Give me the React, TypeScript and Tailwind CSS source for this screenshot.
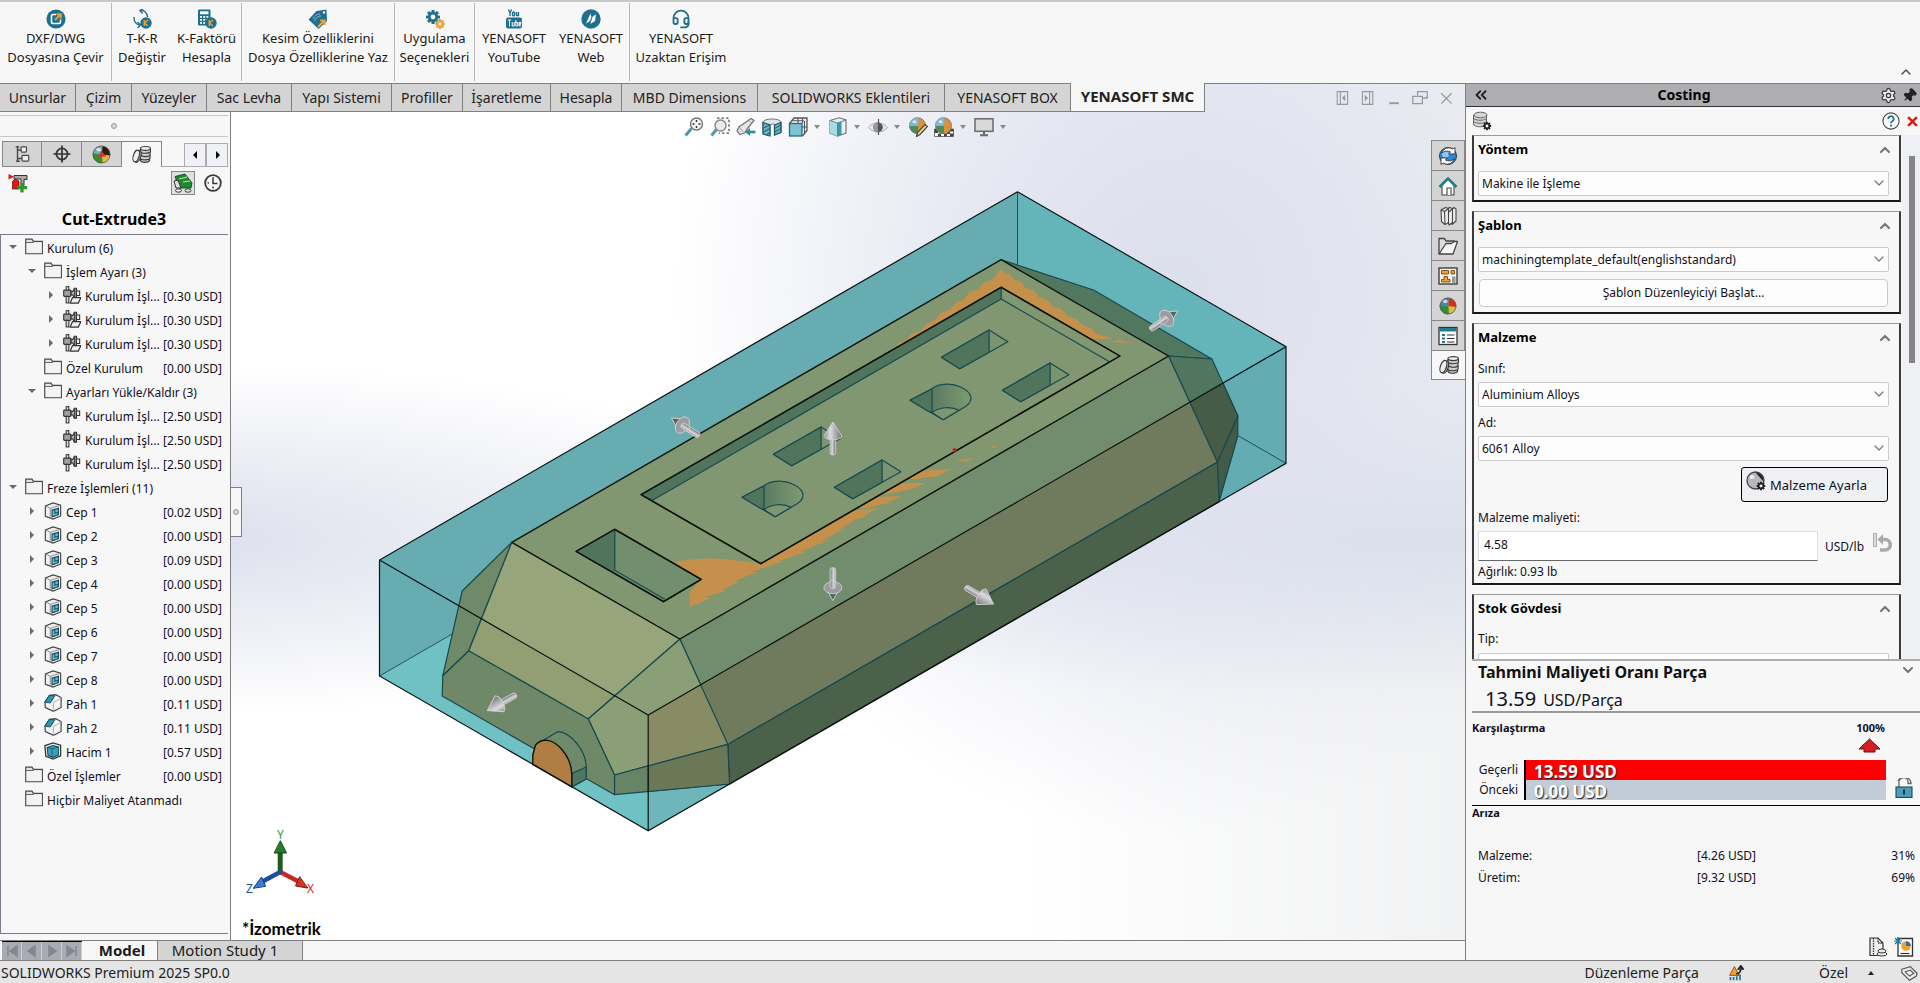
import type { ReactNode } from "react";
import { ChevronDown, ChevronUp, ChevronsLeft, Headset, Pin, Settings } from "lucide-react";

/* ---------- small icons ---------- */

function Svg({ size = 20, children, className = "" }: { size?: number; children: ReactNode; className?: string }) {
  return (
    <svg width={size} height={size} viewBox="0 0 20 20" fill="none" aria-hidden="true" className={`shrink-0 ${className}`}>
      {children}
    </svg>
  );
}

const TEAL = "#1f6f8f";
const ORANGE = "#f0a030";

const Gear = ({ x, y, s, fill, hole = "#f7f7f7" }: { x: number; y: number; s: number; fill: string; hole?: string }) => (
  <g transform={`translate(${x} ${y}) scale(${s})`}>
    {[0, 45, 90, 135].map((a) => (
      <rect key={a} x="-1.6" y="-7" width="3.2" height="14" rx="0.6" fill={fill} transform={`rotate(${a})`} />
    ))}
    <circle r="5" fill={fill} />
    <circle r="2.4" fill={hole} />
  </g>
);

const DxfIcon = () => (
  <Svg>
    <circle cx="10" cy="10" r="9.6" fill={TEAL} />
    <path d="M10 5.5H7a1.5 1.5 0 0 0-1.5 1.5v6A1.5 1.5 0 0 0 7 14.5h6a1.5 1.5 0 0 0 1.5-1.5v-2.500" stroke="#fff" strokeWidth="1.6" />
    <path d="M9 11l5-5M10.500 5.200h4.300v4.300" stroke={ORANGE} strokeWidth="2" />
  </Svg>
);
const KBadge = () => (
  <g>
    <circle cx="14" cy="14" r="5.700" fill={TEAL} />
    <path d="M12.300 11v6M16 11l-3.500 3 3.500 3" stroke={ORANGE} strokeWidth="1.500" />
  </g>
);
const TkrIcon = () => (
  <Svg>
    <path d="M2 8c0 5 2.500 8 6 8M5.500 13L8.500 16 5.500 19" stroke={TEAL} strokeWidth="1.400" />
    <path d="M8 1c5 0 7 3 7.500 7M11 0L8 1.500 10.500 4.500" stroke={TEAL} strokeWidth="1.400" />
    <KBadge />
  </Svg>
);
const CalcIcon = () => (
  <Svg>
    <rect x="1" y="0.500" width="12.500" height="16" rx="1" fill={TEAL} />
    <rect x="3" y="2.300" width="8.500" height="3" fill="#f7f7f7" />
    {[7, 10, 13].map((y) => [3, 6.2, 9.4].map((x) => <rect key={`${x}-${y}`} x={x} y={y} width="2" height="1.800" fill="#f7f7f7" />))}
    <KBadge />
  </Svg>
);
const TagIcon = () => (
  <Svg>
    <path d="M0.500 10.500L8.500 2l10-1.500L19 12l-8.500 8z" fill={TEAL} />
    <path d="M5 10c1.500-3 4-5 7-5M6.500 12c1-3 3.500-5 6.500-5" stroke="#8fc0d0" strokeWidth="0.900" />
    <circle cx="16" cy="3.500" r="1.200" fill="#fff" />
    <path d="M10 18l6-6M12 11.500h4.500V16" stroke={ORANGE} strokeWidth="2.200" />
  </Svg>
);
const GearsIcon = () => (
  <Svg>
    <Gear x={8} y={8} s={1} fill={TEAL} />
    <Gear x={15} y={15} s={0.7} fill={ORANGE} />
  </Svg>
);
const YouTubeIcon = () => (
  <Svg>
    <path d="M4.500 0.500l1.500 3.500 1.500-3.500M6 4v3M9.500 3a1 1.200 0 0 0-1 1.200v1.500a1 1.200 0 0 0 2 0V4.200a1 1.200 0 0 0-1-1.200zM12.500 3v3.500h2V3" stroke={TEAL} strokeWidth="1.400" />
    <rect x="2" y="8.500" width="16" height="11" rx="2" fill={TEAL} />
    <path d="M3.800 11h3.400M5.500 11v6.500M8.200 13v4h2v-4M11.800 11v6h2v-3.500h-2M17 15.300h-1.800v-2H17v1h-1.500M15.200 15v2H17" stroke="#fff" strokeWidth="1" />
  </Svg>
);
const WebIcon = () => (
  <Svg>
    <circle cx="10" cy="10" r="9.700" fill={TEAL} />
    <path d="M9.500 4.500L5 14.500l4-2.500 1.500-4zM15 5.500l-4 2.500-1.800 7 4.800-3z" fill="#fff" />
    <path d="M12.800 3L8 17" stroke={TEAL} strokeWidth="0.900" />
  </Svg>
);

const TreeTabIcon = () => (
  <Svg size={18}>
    <path d="M5 1v17M3 2h4M5 5.500h4M5 15h5M3.500 18h4" stroke="#444" strokeWidth="1.500" />
    <rect x="9" y="2" width="6" height="6" rx="1" stroke="#444" strokeWidth="1.300" fill="#eee" />
    <rect x="10" y="11.500" width="7.500" height="6.500" rx="1" stroke="#444" strokeWidth="1.300" fill="#eee" />
  </Svg>
);
const TargetIcon = () => (
  <Svg size={18}>
    <circle cx="10" cy="10" r="6.200" stroke="#333" strokeWidth="1.900" />
    <path d="M10 0.500v19M0.500 10h19" stroke="#333" strokeWidth="1.900" />
  </Svg>
);
const BallIcon = ({ size = 20, cut = false }: { size?: number; cut?: boolean }) => (
  <Svg size={size}>
    <circle cx="10" cy="10" r="9" fill="#e8b53c" />
    <path d="M10.500 10L1.200 9A9 9 0 0 1 11 1z" fill={cut ? "#6ea8cc" : "#3f86c4"} />
    <path d="M10.500 10L1 9A9 9 0 0 0 11 19z" fill="#2f8f38" />
    <path d="M10.500 10L11 1A9 9 0 0 1 19 11z" fill={cut ? "#2a1a10" : "#cf3020"} />
    {cut && <path d="M10 6l5 6-9 1z" fill="#d03828" />}
    <circle cx="10" cy="10" r="9" stroke="#555" strokeWidth="0.900" />
    <ellipse cx="7" cy="5" rx="2.600" ry="1.900" fill="#fff" opacity="0.700" />
  </Svg>
);
const CoinsIcon = ({ size = 20 }: { size?: number }) => (
  <Svg size={size}>
    <g stroke="#3c3c3c" strokeWidth="1.200" fill="#cfcfcf" strokeLinejoin="round">
      <path d="M9 14v2.500c1 2.300 8 2.300 9.500 0V14" />
      <path d="M8.500 10.500V14c1 2.300 9 2.300 10.500 0v-3.500" />
      <path d="M9.500 7v3.500c1 2.300 8.500 2.300 9.500 0V7" />
      <path d="M9 3.500V7c1 2.300 9 2.300 10.500 0V3.500" />
      <ellipse cx="14.200" cy="3.600" rx="5.200" ry="2" fill="#f0f0f0" />
      <ellipse cx="6" cy="12" rx="3.200" ry="6.500" transform="rotate(18 6 12)" fill="#b4b4b4" />
      <ellipse cx="4.400" cy="11.600" rx="3" ry="6.400" transform="rotate(18 4.400 11.600)" fill="#efefef" />
    </g>
  </Svg>
);
const StackGearIcon = () => (
  <Svg size={20}>
    <g stroke="#666" strokeWidth="1" fill="#d6d6d6">
      <path d="M1.500 4v9c0 3.500 12 4 13 0V4" />
      <path d="M1.500 7c1 3 12 3 13.500 0M1.500 10c1 3 12 3 13.500 0" fill="none" />
      <ellipse cx="8.500" cy="4" rx="6.500" ry="2.800" />
    </g>
    <Gear x={15} y={15} s={0.6} fill="#222" />
  </Svg>
);
const AddCostIcon = () => (
  <Svg size={20}>
    <path d="M6 2.500h13v4h-3v6h-3V6H6z" fill="#aaa" stroke="#333" strokeWidth="1" />
    <path d="M0.500 1L6 3.800 0.500 6.500z" fill="#e01818" />
    <path d="M4.500 8.500l2.500-2.500 4 2v8H4.500z" fill="#e01818" stroke="#600" strokeWidth="0.700" />
    <path d="M14 10v9.500M9.500 14.700h9.500" stroke="#2a9a2a" strokeWidth="3.200" />
  </Svg>
);
const CartIcon = () => (
  <Svg size={20}>
    <path d="M2 3.500l10-2.500 7 9-1 5H6z" fill="#1f8a2c" stroke="#144d1a" strokeWidth="0.900" />
    <path d="M1 8l4-1 3 8H3z" fill="#ddd" stroke="#333" strokeWidth="1" />
    <path d="M6 6l8-2M10 9l7-1" stroke="#b8e0b8" strokeWidth="1.200" />
    <ellipse cx="5.500" cy="17.500" rx="3" ry="1.700" stroke="#333" strokeWidth="1" fill="#eee" />
    <ellipse cx="15" cy="17.500" rx="3" ry="1.700" stroke="#333" strokeWidth="1" fill="#eee" />
  </Svg>
);
const ClockIcon = () => (
  <Svg size={18}>
    <circle cx="10" cy="10" r="8.700" fill="#fbfbfb" stroke="#3a3a3a" strokeWidth="2" />
    <path d="M10 3.500V10.500h5M10 14v2M4 10h1.500" stroke="#3a3a3a" strokeWidth="1.700" />
  </Svg>
);

const FolderIcon = () => (
  <Svg size={18}>
    <path d="M0.800 17.500V1.200h7l1.500 2.500h10v13.800z" fill="#e4e4e4" stroke="#4a4a4a" strokeWidth="1.300" />
    <path d="M2 5.500h16.500v11H2z" fill="#f3f3f3" />
    <path d="M1 5h8.500l1-1.200" stroke="#4a4a4a" strokeWidth="0.900" />
  </Svg>
);
const SetupIcon = ({ folder = false }: { folder?: boolean }) => (
  <Svg size={18}>
    <rect x="3.500" y="0.800" width="3" height="18" fill="#ddd" stroke="#333" strokeWidth="1.200" />
    <rect x="0.800" y="4.500" width="8" height="7" rx="1" fill="#a0a0a0" stroke="#333" strokeWidth="1.300" />
    <path d="M9 6h2l1.500-3.500h2.500v11h-2.500L11 10H9z" fill="#aaa" stroke="#333" strokeWidth="1.200" />
    <path d="M15 5.500h3.500v5H15M13 3.500v10" stroke="#333" strokeWidth="1.200" />
    {folder && <path d="M8 19l2.500-6h9.300L17 19z" fill="#f0f0f0" stroke="#333" strokeWidth="1.300" />}
  </Svg>
);
const PocketIcon = () => (
  <Svg size={18}>
    <path d="M1.500 4.500L10 1l8.500 2.500v12L10 19l-8.500-3z" fill="#efefef" stroke="#444" strokeWidth="1.300" />
    <path d="M1.500 4.500L7 7v11.500" stroke="#888" strokeWidth="1" />
    <path d="M7 7l11.500-3.500" stroke="#888" strokeWidth="1" />
    <path d="M9 9l7-2v7l-7 2.500z" fill="#6fc0cc" stroke="#17506a" strokeWidth="1.400" />
    <path d="M12 8.500v4l4-1" stroke="#17506a" strokeWidth="1.200" />
  </Svg>
);
const ChamferIcon = () => (
  <Svg size={18}>
    <path d="M1 9l5-7.500L13 0.800 19 4v11l-8.500 4.200L1.500 15z" fill="#f4f4f4" stroke="#444" strokeWidth="1.300" />
    <path d="M10.500 19V9.500L19 4.500" stroke="#aaa" strokeWidth="1" />
    <path d="M1 9l5-7.500 6 0.500-5 8z" fill="#2d95a5" stroke="#17506a" strokeWidth="1.100" />
  </Svg>
);
const VolumeIcon = () => (
  <Svg size={18}>
    <path d="M1 4l9-3 8.500 2.500v12L10 19l-8-3z" fill="#dff0f2" stroke="#333" strokeWidth="1.400" />
    <path d="M3.500 6l6.500-2 6 1.500v9L10 17l-5.500-2z" fill="#3aa4b4" stroke="#17506a" strokeWidth="1.200" />
    <path d="M3.500 6L9 7.500V17M9 7.500l7-2" stroke="#17506a" strokeWidth="0.900" />
  </Svg>
);

/* view toolbar */
const ZoomFit = () => (
  <Svg>
    <path d="M1.500 18.500l6-7" stroke="#4d98ae" strokeWidth="3" />
    <circle cx="12.500" cy="7" r="6" fill="#f4f4f4" stroke="#777" strokeWidth="1.400" />
    <path d="M12.500 3v2M12.500 9v2M8.500 7h2M14.500 7h2" stroke="#333" strokeWidth="1.500" />
  </Svg>
);
const ZoomArea = () => (
  <Svg>
    <path d="M1.500 18.500l5-6" stroke="#4d98ae" strokeWidth="3" />
    <path d="M7 1.200h12v15H9" stroke="#555" strokeWidth="1.300" strokeDasharray="2.500 2" />
    <circle cx="10.500" cy="8.500" r="5.500" fill="#e9e9ee" stroke="#888" strokeWidth="1.400" />
  </Svg>
);
const PrevView = () => (
  <Svg>
    <path d="M15 1.500l3 2-6.500 8-3 4.500-4.500 1.500L1 14l2-4z" fill="#e8e8e8" stroke="#777" strokeWidth="1.300" />
    <path d="M3 10l5 5.500M12.500 3.500l3.500 3" stroke="#999" strokeWidth="1" />
    <path d="M19.500 15h-6" stroke="#2d8ca0" strokeWidth="2.600" />
    <path d="M9 15l5-4v8z" fill="#2d8ca0" />
  </Svg>
);
const SectionView = () => (
  <Svg>
    <path d="M1 5c1-4 17-4 18 0v10l-5 2V8.500c-2-2-4-2-6 0V18L1 16z" fill="#e4e4e4" stroke="#777" strokeWidth="1" />
    <path d="M1 5.500L8 8v11l-7-2zM12.500 8L19 5.500v10L12.500 18z" fill="#6fb3c6" stroke="#1d5a70" strokeWidth="1.300" />
    <path d="M1.500 11L8 8M1.500 15L8 11.500M4 18l4-2.500M12.500 11.500L19 8M12.500 15l6.500-3.500" stroke="#1d5a70" strokeWidth="1" />
  </Svg>
);
const OrientationIcon = () => (
  <Svg>
    <path d="M1.500 6.500L6 1h13v12.500L14.500 19" stroke="#555" strokeWidth="1.300" fill="#f4f4f4" />
    <path d="M10 1v5M14.500 1v5M4 3.800h12M16.500 4v12M14 10h5" stroke="#555" strokeWidth="1.100" />
    <rect x="1.500" y="6.500" width="12.500" height="12.500" fill="#7cc4d4" stroke="#2a6a80" strokeWidth="1.300" />
  </Svg>
);
const DisplayStyleIcon = () => (
  <Svg>
    <path d="M2 3.500L11 0.800l7 2.200v13L9.500 19.200 2 16z" fill="#efefef" stroke="#777" strokeWidth="1.200" />
    <path d="M2 3.500l7.500 2.500v13.200L2 16z" fill="#a8dbe6" />
    <path d="M9.500 6l4-1.500v13l-4 1.700z" fill="#3f98b0" />
    <path d="M2 3.500l7.500 2.500L18 3M9.500 6v13" stroke="#4d7f8f" strokeWidth="0.900" />
  </Svg>
);
const EyeIcon = () => (
  <Svg>
    <path d="M0.500 10.500C4 5 14 4 19.500 10.500 14 17 5 16 0.500 10.500z" fill="#e9e9e9" stroke="#aaa" strokeWidth="1" />
    <circle cx="10" cy="10.300" r="4.800" fill="#555" />
    <path d="M10 5.500a4.800 4.800 0 0 0 0 9.600z" fill="#999" />
    <path d="M10.500 2v16" stroke="#555" strokeWidth="1.200" />
  </Svg>
);
const SceneBall = () => (
  <g>
    <circle cx="9.500" cy="8.700" r="8" fill="#d9923a" stroke="#777" strokeWidth="0.900" />
    <path d="M10 9H1.500A8 8 0 0 1 10.500 0.800z" fill="#7db8dc" />
    <path d="M10 9H1.500a8 8 0 0 0 8.500 7.600z" fill="#4f8a5c" />
    <ellipse cx="6.500" cy="4.800" rx="2" ry="1.500" fill="#fff" opacity="0.700" />
  </g>
);
const EditAppearance = () => (
  <Svg>
    <SceneBall />
    <path d="M17 7.500l2.500 2L12 17.500l-3.500 2 1-4z" fill="#f6d488" stroke="#444" strokeWidth="1.200" />
  </Svg>
);
const SceneIcon = () => (
  <Svg>
    <path d="M0.500 12h19v7.500H0.500z" fill="#fff" stroke="#555" strokeWidth="0.800" />
    <path d="M0.500 12h3.500v4H0.500zM7 14h3v3H7zM13 14h3v3h-3zM16 12h3.500v2.500H16zM4 16.500h3v3H4zM10 16.500h3v3h-3zM16 16.500h3.500v3H16z" fill="#444" />
    <SceneBall />
  </Svg>
);
const MonitorIcon = () => (
  <Svg>
    <rect x="1" y="1.800" width="18" height="12.500" fill="#d8d8d8" stroke="#6a6a6a" strokeWidth="1.500" />
    <path d="M10 14.500v3.500M6 18.300h8" stroke="#6a6a6a" strokeWidth="2" />
  </Svg>
);

/* task pane */
const RefreshBall = () => (
  <Svg>
    <circle cx="10" cy="10" r="8.500" fill="#2f86d8" stroke="#134" strokeWidth="0.900" />
    <circle cx="7.500" cy="8" r="3.500" fill="#8fc6f4" />
    <path d="M3.500 7C5.500 2 11 0.500 14.500 3L17 1.500V8h-6.500l2-2C10 4.500 6.500 5 3.500 7z" fill="#fff" stroke="#333" strokeWidth="0.900" />
    <path d="M16.500 13c-2 5-7.500 6.500-11 4L3 18.500V12h6.500l-2 2c2.500 1.500 6 1 9-1z" fill="#fff" stroke="#333" strokeWidth="0.900" />
  </Svg>
);
const HomeIcon = () => (
  <Svg>
    <path d="M4 9v10h12V9l-6-6z" fill="#fff" stroke="#444" strokeWidth="1.100" />
    <path d="M1.500 11L10 2.500 18.500 11" stroke="#237a8c" strokeWidth="2.600" />
    <path d="M9 19v-7h4v7" fill="#fff" stroke="#444" strokeWidth="1.100" />
  </Svg>
);
const BooksIcon = () => (
  <Svg>
    <g fill="#eee" stroke="#444" strokeWidth="1.100" strokeLinejoin="round">
      <path d="M12 5l4-3.500 2 1.500v12L14 18.500z" />
      <path d="M7.500 4.500L11.500 1.500l3 1v14L11 19z" />
      <path d="M3 4l4.500-2.500 3 1v14L7 18.500l-3.500-3z" />
      <path d="M3 4l3.500 1.500L7 18.500M6.500 5.500l4-3M11 6l3-3" fill="none" />
    </g>
  </Svg>
);
const OpenFolder = () => (
  <Svg>
    <path d="M1 18V2.500h5.500L8 5h8v3" fill="#dcdcdc" stroke="#444" strokeWidth="1.300" />
    <path d="M1 18L8 7.500h5.500L16 5.500h3.500L15 18z" fill="#f6f6f6" stroke="#444" strokeWidth="1.300" strokeLinejoin="round" />
  </Svg>
);
const PaletteIcon = () => (
  <Svg>
    <rect x="1" y="2" width="18" height="16" fill="#f5f5f5" stroke="#333" strokeWidth="1.300" />
    <path d="M3.500 4.500h7v3.500h-7zM13 4.500h3.500V8H13zM6 10.500h3.500v3h2.500V16H3.500v-2.500H6z" fill={ORANGE} stroke="#7a4a10" strokeWidth="0.900" />
    <path d="M14 10.500h3.500V17H14z" fill="#999" />
  </Svg>
);
const PropsIcon = () => (
  <Svg>
    <rect x="1" y="1.500" width="18" height="17" fill="#fff" stroke="#333" strokeWidth="1.300" />
    <path d="M1.700 2h16.600v3.500H1.700z" fill="#237a8c" />
    <path d="M4 8h3v2H4zM4 11.500h3v2H4zM4 15h3v2H4z" fill="#237a8c" />
    <path d="M9 9h7.500M9 12.500h7.500M9 16h7.500" stroke="#333" strokeWidth="1.200" />
  </Svg>
);

/* ---------- ribbon ---------- */

type RibbonItem = { a: string; b: string; icon: ReactNode; w: string };
const ribbon: RibbonItem[][] = [
  [{ a: "DXF/DWG", b: "Dosyasına Çevir", icon: <DxfIcon />, w: "w-[111px]" }],
  [
    { a: "T-K-R", b: "Değiştir", icon: <TkrIcon />, w: "w-[60px]" },
    { a: "K-Faktörü", b: "Hesapla", icon: <CalcIcon />, w: "w-[69px]" },
  ],
  [{ a: "Kesim Özelliklerini", b: "Dosya Özelliklerine Yaz", icon: <TagIcon />, w: "w-[152px]" }],
  [{ a: "Uygulama", b: "Seçenekleri", icon: <GearsIcon />, w: "w-[79px]" }],
  [
    { a: "YENASOFT", b: "YouTube", icon: <YouTubeIcon />, w: "w-[78px]" },
    { a: "YENASOFT", b: "Web", icon: <WebIcon />, w: "w-[76px]" },
  ],
  [{ a: "YENASOFT", b: "Uzaktan Erişim", icon: <Headset size={20} color={TEAL} strokeWidth={2.2} aria-hidden="true" />, w: "w-[102px]" }],
];

function Ribbon() {
  return (
    <header className="flex h-[83px] shrink-0 items-start justify-between border-t-2 border-[#c8c8c8] bg-[#f7f7f7]">
      <div className="flex pt-px">
        {ribbon.map((group, i) => (
          <div key={i} className={`flex h-[78px] ${i < ribbon.length - 1 ? "border-r border-[#b8b8b8]" : ""}`}>
            {group.map((it) => (
              <button key={it.b} type="button" className={`flex flex-col items-center pt-[6px] text-[13px] leading-[19px] whitespace-nowrap text-[#1a1a1a] ${it.w}`}>
                {it.icon}
                <span>{it.a}</span>
                <span>{it.b}</span>
              </button>
            ))}
          </div>
        ))}
      </div>
      <button type="button" aria-label="Daralt" className="mr-[6px] self-end pb-[3px]">
        <ChevronUp size={16} color="#444" />
      </button>
    </header>
  );
}

const tabs = [
  { t: "Unsurlar", w: "w-[76px]" },
  { t: "Çizim", w: "w-[56px]" },
  { t: "Yüzeyler", w: "w-[75px]" },
  { t: "Sac Levha", w: "w-[85px]" },
  { t: "Yapı Sistemi", w: "w-[100px]" },
  { t: "Profiller", w: "w-[71px]" },
  { t: "İşaretleme", w: "w-[88px]" },
  { t: "Hesapla", w: "w-[71px]" },
  { t: "MBD Dimensions", w: "w-[136px]" },
  { t: "SOLIDWORKS Eklentileri", w: "w-[187px]" },
  { t: "YENASOFT BOX", w: "w-[126px]" },
];

function TabStrip() {
  return (
    <div className="flex h-[29px] shrink-0 justify-between">
      <nav className="flex text-sm whitespace-nowrap text-[#222]">
        {tabs.map((tab) => (
          <button key={tab.t} type="button" className={`border-y border-r border-[#808080] bg-[#d4d4d4] ${tab.w}`}>
            {tab.t}
          </button>
        ))}
        <button type="button" className="w-[134px] border-r border-b border-[#808080] bg-[#f7f7f7] text-[15px] font-bold">
          YENASOFT SMC
        </button>
      </nav>
      <div className="flex flex-1 items-center justify-end gap-[10px] border-t border-[#808080] pr-[11px]">
        <Svg size={16}>
          <path d="M4 2h13v16H4zM8 2v16" stroke="#999" strokeWidth="1.400" />
          <path d="M14 6v8l-4-4z" fill="#999" />
        </Svg>
        <Svg size={16}>
          <path d="M3 2h13v16H3zM12 2v16" stroke="#999" strokeWidth="1.400" />
          <path d="M6 6v8l4-4z" fill="#999" />
        </Svg>
        <Svg size={16}>
          <path d="M4 16.500h12" stroke="#999" strokeWidth="2.400" />
        </Svg>
        <Svg size={16}>
          <path d="M7 7V2h12v8h-5M1 8h12v9H1z" stroke="#999" strokeWidth="1.600" />
        </Svg>
        <Svg size={16}>
          <path d="M4 4l13 13M17 4L4 17" stroke="#999" strokeWidth="1.600" />
        </Svg>
      </div>
    </div>
  );
}

/* ---------- cost tree ---------- */

type Row = { lvl: 0 | 1 | 2; open?: boolean; arrow?: boolean; icon: ReactNode; t: string; p?: string };
const pockets = ["0.02", "0.00", "0.09", "0.00", "0.00", "0.00", "0.00", "0.00"];
const rows: Row[] = [
  { lvl: 0, arrow: true, open: true, icon: <FolderIcon />, t: "Kurulum (6)" },
  { lvl: 1, arrow: true, open: true, icon: <FolderIcon />, t: "İşlem Ayarı (3)" },
  { lvl: 2, arrow: true, icon: <SetupIcon folder />, t: "Kurulum İşl...", p: "0.30" },
  { lvl: 2, arrow: true, icon: <SetupIcon folder />, t: "Kurulum İşl...", p: "0.30" },
  { lvl: 2, arrow: true, icon: <SetupIcon folder />, t: "Kurulum İşl...", p: "0.30" },
  { lvl: 1, icon: <FolderIcon />, t: "Özel Kurulum", p: "0.00" },
  { lvl: 1, arrow: true, open: true, icon: <FolderIcon />, t: "Ayarları Yükle/Kaldır (3)" },
  { lvl: 2, icon: <SetupIcon />, t: "Kurulum İşl...", p: "2.50" },
  { lvl: 2, icon: <SetupIcon />, t: "Kurulum İşl...", p: "2.50" },
  { lvl: 2, icon: <SetupIcon />, t: "Kurulum İşl...", p: "2.50" },
  { lvl: 0, arrow: true, open: true, icon: <FolderIcon />, t: "Freze İşlemleri (11)" },
  ...pockets.map((p, i): Row => ({ lvl: 1, arrow: true, icon: <PocketIcon />, t: `Cep ${i + 1}`, p })),
  { lvl: 1, arrow: true, icon: <ChamferIcon />, t: "Pah 1", p: "0.11" },
  { lvl: 1, arrow: true, icon: <ChamferIcon />, t: "Pah 2", p: "0.11" },
  { lvl: 1, arrow: true, icon: <VolumeIcon />, t: "Hacim 1", p: "0.57" },
  { lvl: 0, icon: <FolderIcon />, t: "Özel İşlemler", p: "0.00" },
  { lvl: 0, icon: <FolderIcon />, t: "Hiçbir Maliyet Atanmadı" },
];
const indents = ["pl-[8px]", "pl-[27px]", "pl-[46px]"];

function CostTree() {
  return (
    <ul className="min-h-0 flex-1 overflow-hidden border-t border-b border-l border-[#7b7b8b] text-xs text-[#10101c]">
      {rows.map((r, i) => (
        <li key={i} className={`flex h-[24px] items-center pr-[6px] whitespace-nowrap ${indents[r.lvl]}`}>
          <svg width="8" height="8" viewBox="0 0 8 8" className="mr-[8px] shrink-0" aria-hidden="true">
            {r.arrow && <path d={r.open ? "M0 2h8L4 6z" : "M2 0v8l4-4z"} fill="#6a6a6a" />}
          </svg>
          {r.icon}
          <span className="ml-[4px] flex-1 pt-[3px]">{r.t}</span>
          {r.p && <span className="pt-[3px]">[{r.p} USD]</span>}
        </li>
      ))}
    </ul>
  );
}

function LeftPanel() {
  const tab = "flex h-[26px] w-[40px] items-center justify-center border-t border-r border-[#888]";
  return (
    <aside className="flex w-[231px] shrink-0 flex-col border-r border-[#808080] bg-[#f7f7f7] pr-[2px]">
      <div className="mt-[3px] flex h-[22px] items-center justify-center border-y border-[#c8c8c8]">
        <span className="size-[6px] rounded-full border border-[#999] bg-[#d8d8d8]" />
      </div>
      <div className="mt-1 flex pl-[2px]">
        <button type="button" aria-label="Tasarım ağacı" className={`${tab} border-b border-l bg-[#d4d4d4]`}><TreeTabIcon /></button>
        <button type="button" aria-label="Hedef" className={`${tab} border-b bg-[#d4d4d4]`}><TargetIcon /></button>
        <button type="button" aria-label="Görünümler" className={`${tab} border-b bg-[#d4d4d4]`}><BallIcon size={19} cut /></button>
        <button type="button" aria-label="Maliyet" className={tab}><CoinsIcon size={19} /></button>
        <span className="flex-1 border-b border-[#aaa]" />
        {["M6 2v8L2 6z", "M3 2v8l4-4z"].map((d, i) => (
          <button key={d} type="button" aria-label={i ? "İleri" : "Geri"} className="mt-[2px] flex h-[24px] w-[22px] items-center justify-center border border-[#aaaab0] bg-[#f0f1f5]">
            <svg width="9" height="12" viewBox="0 0 9 12" aria-hidden="true"><path d={d} fill="#000" /></svg>
          </button>
        ))}
      </div>
      <div className="mt-1 flex h-[24px] items-center pr-[6px] pl-[8px]">
        <button type="button" aria-label="Maliyet ekle"><AddCostIcon /></button>
        <button type="button" aria-label="Maliyet" className="ml-auto flex size-[24px] items-center justify-center border border-[#888] bg-[#e0e0e0]"><CartIcon /></button>
        <button type="button" aria-label="Süre" className="ml-[9px]"><ClockIcon /></button>
      </div>
      <h1 className="flex h-[39px] items-center justify-center pt-[9px] text-base font-bold text-black">Cut-Extrude3</h1>
      <CostTree />
      <div className="h-[6px] shrink-0" />
    </aside>
  );
}

/* ---------- viewport ---------- */

const EDGE = { stroke: "#17494f", strokeWidth: 1.2, strokeLinejoin: "round" } as const;
const BLACK = { stroke: "#10150c", strokeWidth: 1.4, strokeLinejoin: "round" } as const;

const SlotHole = ({ x = 0, y = 0 }) => (
  <g transform={`translate(${x} ${y})`} {...EDGE}>
    <path d="M989.600 330L1008.400 341.700 960.200 368.700 941.900 357.300z" fill="#7a946f" />
    <path d="M989.600 330V352.300L960.200 368.700 941.900 357.300z" fill="#51755c" />
  </g>
);
const RoundHole = ({ x = 0, y = 0 }) => (
  <g transform={`translate(${x} ${y})`} {...EDGE}>
    <path d="M910.600 400.300L932.500 388.700C940 383 953 383 961 387C974 393 974 401 966 406.500L943.700 419.700z" fill="url(#bore)" />
    <path d="M910.600 400.300L932.500 388.700V411.700L930 412z" fill="#51755c" />
    <path d="M932.500 412.500C940 407 952 406 959.500 410.300L943.700 419.700z" fill="#7f9771" />
  </g>
);
const Arrow = ({ x, y, r, back = false }: { x: number; y: number; r: number; back?: boolean }) => (
  <g transform={`translate(${x} ${y}) rotate(${r})`} stroke="#d0d0d0" strokeWidth="0.900">
    <rect x="-2.800" y="12" width="5.600" height="21" rx="2.400" fill="url(#shaft)" />
    {back ? (
      <>
        <path d="M-6 11L0 0l6 11z" fill="#4f6a58" />
        <ellipse cx="0" cy="13" rx="9" ry="6" fill="#9b9ba0" />
        <rect x="-2.800" y="12" width="5.600" height="9" rx="2.400" fill="url(#shaft)" />
      </>
    ) : (
      <path d="M0 0L9 14C7 19-7 19-9 14z" fill="url(#shaft)" />
    )}
  </g>
);

function ModelCanvas() {
  return (
    <svg viewBox="231 112 1235 828" preserveAspectRatio="xMidYMid slice" className="absolute inset-0 h-full w-full" role="img" aria-label="Parça modeli">
      <defs>
        <linearGradient id="bore" x1="0" x2="1">
          <stop offset="0.300" stopColor="#56785f" />
          <stop offset="1" stopColor="#809a72" />
        </linearGradient>
        <linearGradient id="shaft" x1="0" x2="1">
          <stop offset="0" stopColor="#8a8a90" />
          <stop offset="0.350" stopColor="#dcdce0" />
          <stop offset="1" stopColor="#707076" />
        </linearGradient>
        <clipPath id="under">
          <path d="M380 560L648.700 715L1286.500 346.700V900H380z" />
        </clipPath>
      </defs>

      {/* stock block */}
      <path d="M380 560L1018 191.700V308L380 676z" fill="#66acb1" />
      <path d="M1018 191.700L1286.500 346.700V463.300L1018 308z" fill="#64b4ba" />
      <path d="M380 676L1018 308L1286.500 463.300L648.700 830.700z" fill="#6fc1c3" />
      <path d="M1286.500 346.700V463.300L1219 502 1180 408z" fill="#62acb2" />
      <path d="M648.700 780L735 782 648.700 830.700z" fill="#6db6ba" />
      <g stroke="#1c5358" strokeWidth="1">
        <path d="M1018 192V308M380 676L560 572M1180 402L1286.500 463.300" />
      </g>

      {/* part */}
      <g {...EDGE}>
        <path d="M1001.700 259.700L1094 290 1212.400 359 1169 356z" fill="#52775f" />
        <path d="M1169 356L1212.400 359 1238.300 416 1217.800 462z" fill="#507660" />
        <path d="M1238.300 416V436L1219.600 501.700 1217.800 462z" fill="#445a48" />
        <path d="M728.300 744.300L1217.800 462 1219.600 501.700 730 784z" fill="#4c6149" />
        <path d="M680.300 639L1169 356 1217.800 462 728.300 744.300z" fill="#718d6d" />
        <path d="M680.300 639L728.300 744.300 615 775 588.700 718.700z" fill="#8a9f76" />
        <path d="M615 775L728.300 744.300 730 784 615 794.700z" fill="#688467" />
        <path d="M512.300 542.300L462.700 591 443.300 675.700 469.300 650.700z" fill="#6f8a69" />
        <path d="M512.300 542.300L680.300 639 588.700 718.700 469.300 650.700z" fill="#96a67a" />
        <path d="M469.300 650.700L588.700 718.700 615 775V794.700L442.700 696 443.300 675.700z" fill="#6f8868" />
      </g>
      {/* shading of the part below the stock's front edges */}
      <g clipPath="url(#under)">
        <path d="M1169 356L1212.400 359 1238.300 416 1217.800 462z" fill="#465c47" {...EDGE} />
        <path d="M680.300 639L1169 356 1217.800 462 728.300 744.300z" fill="#707a5c" {...EDGE} />
        <path d="M512.300 542.300L680.300 639 588.700 718.700 469.300 650.700z" fill="#929f72" {...EDGE} />
        <path d="M648.700 640H728V744.300L648.700 766z" fill="#878c64" />
        <path d="M728 560H900L728.300 744.300 680.300 639z" fill="#707a5c" />
        <path d="M680.300 639L728.300 744.300 648.700 766" fill="none" {...EDGE} />
        <path d="M648.700 766L728.300 744.300 730 784 648.700 791.500z" fill="#6b7858" {...EDGE} />
      </g>

      <path d="M512.300 542.300L1001.700 259.700 1169 356 680.300 639z" fill="#809771" {...BLACK} />
      <g fill="#c4904c">
        <path d="M1002 269l4 5 5 0 3 6 7 1 5 7 8 2 5 7 9 3 6 7 8 2 6 7 9 3 6 6 8 3 5 5 9 3 8 3H1092L1001.700 287.300 893 350l8-8 5-1 6-7 9-3 6-7 9-4 5-7 9-3 6-7 9-4 5-7 9-3 6-7 8-2 5-7z" />
        <path d="M1110 342l10-2 4 1 12 2z" />
        <path d="M675 562.300C700 556 725 558 761.300 563.700L849 513 857 512 853 522 838 530 846 528 822 541 832 539 800 552 806 552 780 561 785 561 752 572 758 572 735 581 740 582 722 590 727 591 705 597 712 598 690 607 690 592 701.700 579.300z" />
        <path d="M850 511L878 508 864 516 868 516 843 523z" />
        <path d="M876 497L902 496 888 503 868 508 858 508z" />
        <path d="M900 483L926 483 912 489 893 493 882 494z" />
        <path d="M920 471L951 469 938 476 917 479 908 479z" />
        <path d="M956 460L974 458 966 462zM990 447L999 445 994 448z" />
      </g>
      <path d="M641.700 494.700L1001.700 287.300 1120.400 356 761.300 563.700z" fill="#809771" {...BLACK} />
      <g {...EDGE}>
        <path d="M641.700 494.700L1001.700 287.300V299L652.600 500.500z" fill="#51755c" />
        <path d="M1001.700 299L1110 361.700" />
      </g>
      <path d="M641.700 494.700L1001.700 287.300 1120.400 356 761.300 563.700z" fill="none" {...BLACK} />
      <SlotHole />
      <SlotHole x={-168} y={97} />
      <SlotHole x={61} y={33} />
      <SlotHole x={-107} y={130} />
      <RoundHole />
      <RoundHole x={-168} y={97} />

      <path d="M615.300 529.300L701.700 579.300 664 601.700 576.700 551.300z" fill="#718f6d" {...BLACK} />
      <path d="M615.300 529.300V573.500L576.700 551.300z" fill="#51755c" />
      <path d="M615.300 529.300V570.300L665.300 599.300" fill="none" {...EDGE} />
      <path d="M615.300 529.300L701.700 579.300 664 601.700 576.700 551.300z" fill="none" {...BLACK} />
      <path d="M730 784L1219.600 501.700" {...BLACK} />
      <circle cx="955" cy="450" r="2" fill="#d02020" />

      {/* boss at the front */}
      <path d="M544.300 740L558 731.700C572 732 587 752 586.700 768V779L572.300 787z" fill="#6e8a6a" {...EDGE} />
      <path d="M572.300 773.500L586.700 767V779L572.300 787z" fill="#4f7660" {...EDGE} />
      <path d="M533.300 764.300V755L536 745C543 737 553 740 560 747C568 755 572 765 572.300 774V787z" fill="#b07d43" {...BLACK} />

      {/* stock outline */}
      <path d="M1018 191.700L1286.500 346.700V463.300L1219.600 501.700M730 784L648.700 830.700 380 676V560L1018 191.700M380 560L648.700 715 1286.500 346.700M648.700 715V830.700" fill="none" stroke="#0a1414" strokeWidth="1.200" />

      <Arrow x={833.4} y={422} r={0} />
      <Arrow x={833.4} y={600.7} r={180} back />
      <Arrow x={672} y={418} r={-57} back />
      <Arrow x={1178} y={311} r={56} back />
      <Arrow x={994} y={604} r={121} />
      <Arrow x={487.7} y={710.7} r={241} />

      {/* orientation triad */}
      <g strokeLinecap="round">
        <path d="M280.700 872V852" stroke="#1d5c1c" strokeWidth="5" />
        <path d="M281 841L287 853H275z" fill="#23802a" stroke="#163f18" />
        <path d="M280.700 872L298 881" stroke="#c8281e" strokeWidth="4.500" />
        <path d="M308 888L296 886 300 877z" fill="#d83224" stroke="#7a1810" />
        <path d="M280.700 872L264 881" stroke="#1c4ea0" strokeWidth="4.500" />
        <path d="M254 888L262 877 266 886z" fill="#3c7ad8" stroke="#153a78" />
      </g>
      <g fontFamily='"Noto Sans", sans-serif' fontSize="12" textAnchor="middle">
        <text x="281" y="839" fill="#2a9a2a">Y</text>
        <text x="311" y="893" fill="#e02020">X</text>
        <text x="250" y="893" fill="#1c4ea0">Z</text>
      </g>
    </svg>
  );
}

const Caret = () => <svg width="6" height="6" viewBox="0 0 6 6" className="shrink-0" aria-hidden="true"><path d="M0 1h6L3 5z" fill="#888" /></svg>;

function Viewport() {
  const pane = [
    { name: "Kaynaklar", icon: <RefreshBall /> },
    { name: "Ana sayfa", icon: <HomeIcon /> },
    { name: "Tasarım kitaplığı", icon: <BooksIcon /> },
    { name: "Dosya gezgini", icon: <OpenFolder /> },
    { name: "Görünüm paleti", icon: <PaletteIcon /> },
    { name: "Görünümler", icon: <BallIcon size={18} /> },
    { name: "Özel özellikler", icon: <PropsIcon /> },
  ];
  return (
    <main className="relative flex min-w-0 flex-1 flex-col overflow-hidden">
      <ModelCanvas />
      <div className="relative flex h-[30px] items-center gap-[6px] self-center pr-[6px]">
        <ZoomFit /><ZoomArea /><PrevView /><SectionView />
        <div className="flex items-center gap-[6px] pr-[2px]"><OrientationIcon /><Caret /></div>
        <div className="flex items-center gap-[6px] pr-[2px]"><DisplayStyleIcon /><Caret /></div>
        <div className="flex items-center gap-[6px] pr-[2px]"><EyeIcon /><Caret /></div>
        <EditAppearance />
        <div className="flex items-center gap-[6px] pr-[2px]"><SceneIcon /><Caret /></div>
        <MonitorIcon /><Caret />
      </div>
      <div className="absolute top-[28px] right-0 flex w-[34px] flex-col border-l border-[#888]">
        {pane.map((p) => (
          <button key={p.name} type="button" aria-label={p.name} className="flex h-[30px] items-center justify-center border-t border-r border-[#888] bg-[#d4d4d4]">
            {p.icon}
          </button>
        ))}
        <button type="button" aria-label="Costing" className="flex h-[30px] items-center justify-center border-y border-[#888] bg-[#f7f7f7]">
          <CoinsIcon />
        </button>
      </div>
      <div className="absolute top-[375px] left-0 flex h-[50px] w-[11px] items-center justify-center border border-l-0 border-[#808080] bg-[#f7f7f7]">
        <span className="size-[6px] rounded-full border border-[#999] bg-[#d8d8d8]" />
      </div>
      <div className="relative mt-auto ml-[11px] font-['Lato'] text-[17px] leading-[22px] font-bold text-black">*İzometrik</div>
    </main>
  );
}

function SheetTabs() {
  return (
    <div className="flex h-[20px] shrink-0 border-t border-[#808080] bg-[#f7f7f7] text-[15px] leading-[19px] text-[#1a1a1a]">
      <div className="ml-[2px] flex w-[80px] border-t border-black">
        {["M5 2v10M14 2v10L7 7z", "M12 2v10L5 7z", "M6 2v10l7-5z", "M13 2v10M4 2v10l7-5z"].map((d, i) => (
          <button key={d} type="button" aria-label={`Sekme gezintisi ${i + 1}`} className="flex w-[20px] items-center justify-center border-r border-[#d0d0d4] bg-[#a9aab2]">
            <svg width="18" height="14" viewBox="0 0 18 14" aria-hidden="true"><path d={d} fill="#85868f" stroke="#85868f" strokeWidth="1.500" /></svg>
          </button>
        ))}
      </div>
      <button type="button" className="w-[76px] border-r border-[#808080] pl-[5px] font-bold">Model</button>
      <button type="button" className="w-[145px] border-r border-[#808080] bg-[#d4d4d4] pr-[10px]">Motion Study 1</button>
    </div>
  );
}

/* ---------- costing pane ---------- */

function Group({ title, children, last = false }: { title: string; children: ReactNode; last?: boolean }) {
  return (
    <section className={`border-x-2 border-t border-x-[#3a3a3e] border-t-[#999] px-[4px] ${last ? "" : "mb-[9px] border-b-2 border-b-[#18181c]"}`}>
      <div className="flex h-[27px] items-center justify-between pr-[2px]">
        <h2 className="text-[13px] font-bold text-black">{title}</h2>
        <ChevronUp size={16} color="#777" strokeWidth={3.2} aria-hidden="true" />
      </div>
      {children}
    </section>
  );
}

function Select({ id, label, value }: { id: string; label: string; value: string }) {
  return (
    <div className="relative mr-[6px]">
      <select id={id} aria-label={label} defaultValue={value} className="block h-[25px] w-full appearance-none rounded-[2px] border border-[#ccc] bg-[#fdfdfd] pt-px pl-[3px] text-xs text-[#10101c]">
        <option>{value}</option>
      </select>
      <ChevronDown size={16} color="#777" strokeWidth={1.8} className="pointer-events-none absolute top-[4px] right-[2px]" aria-hidden="true" />
    </div>
  );
}

function Bar({ label, value, color }: { label: string; value: string; color: string }) {
  return (
    <div className="flex h-[20px] items-center">
      <span className="w-[46px] shrink-0 pr-[6px] text-right whitespace-nowrap">{label}</span>
      <div className={`h-full flex-1 border-l-2 border-black pl-[8px] text-[17px] leading-[24px] font-bold text-white [text-shadow:1px_1px_1px_#222] ${color}`}>{value}</div>
    </div>
  );
}

function CostingPane() {
  return (
    <aside className="flex w-[455px] shrink-0 flex-col border-t border-l border-[#808080] bg-[#f7f7f7] text-xs text-[#10101c]">
      <div className="flex h-[23px] shrink-0 items-center border-b border-[#333] bg-[#adaeb2] pr-[3px] pl-[6px]">
        <ChevronsLeft size={18} color="#222" strokeWidth={2.4} aria-hidden="true" />
        <h2 className="flex-1 pr-[2px] text-center text-sm font-bold text-black">Costing</h2>
        <Settings size={17} color="#333" fill="#e8e8e8" strokeWidth={1.7} aria-hidden="true" />
        <Pin size={15} color="#222" fill="#222" className="ml-[5px] rotate-45" aria-hidden="true" />
      </div>
      <div className="flex h-[28px] shrink-0 items-center pr-[2px] pl-[6px]">
        <StackGearIcon />
        <Svg size={18} className="ml-auto">
          <circle cx="10" cy="10" r="9" fill="#f8f8f8" stroke="#444" strokeWidth="1.200" />
          <path d="M7 8a3 3 0 1 1 4.500 2.300C10.300 11 10 11.500 10 12.500M10 14v2" stroke="#2478a0" strokeWidth="2" />
        </Svg>
        <Svg size={11} className="ml-[7px]">
          <path d="M2 2l16 16M18 2L2 18" stroke="#d02018" strokeWidth="4.500" />
        </Svg>
      </div>

      <div className="flex h-[524px] shrink-0 overflow-hidden">
        <div className="ml-[6px] flex-1">
          <Group title="Yöntem">
            <div className="pt-[8px] pb-[4px]"><Select id="method" label="Yöntem" value="Makine ile İşleme" /></div>
          </Group>
          <Group title="Şablon">
            <div className="flex flex-col gap-[7px] pt-[8px] pb-[5px]">
              <Select id="template" label="Şablon" value="machiningtemplate_default(englishstandard)" />
              <button type="button" className="mr-[7px] ml-px h-[28px] rounded-[4px] border border-[#ccc] bg-[#fdfdfd]">Şablon Düzenleyiciyi Başlat...</button>
            </div>
          </Group>
          <Group title="Malzeme">
            <label htmlFor="mclass" className="block pt-[8px] leading-[19px]">Sınıf:</label>
            <div className="pt-[4px]"><Select id="mclass" label="Sınıf" value="Aluminium Alloys" /></div>
            <label htmlFor="mname" className="block pt-[7px] leading-[18px]">Ad:</label>
            <div className="pt-[4px]"><Select id="mname" label="Ad" value="6061 Alloy" /></div>
            <button type="button" className="mt-[6px] mr-[7px] ml-auto flex h-[35px] w-[147px] items-center gap-[4px] rounded-[3px] border border-black bg-[#eef0f4] pt-[2px] pl-[4px] text-[13px]">
              <Svg className="-mt-[10px]">
                <circle cx="9.500" cy="9.500" r="8.500" fill="#b8b8b8" stroke="#444" strokeWidth="1.300" />
                <path d="M9.500 1.500a8 8 0 0 1 8 9z" fill="#222" />
                <ellipse cx="6" cy="6" rx="2.500" ry="2" fill="#eee" />
                <Gear x={15} y={15} s={0.62} fill="#222" hole="#eef0f4" />
              </Svg>
              Malzeme Ayarla
            </button>
            <label htmlFor="mcost" className="block pt-[6px] leading-[20px]">Malzeme maliyeti:</label>
            <div className="flex items-center pt-[3px]">
              <input id="mcost" defaultValue="4.58" className="h-[30px] w-[340px] border border-[#ddd] border-b-[#666] bg-white pb-[4px] pl-[5px] text-xs" />
              <span className="ml-[7px] pt-[2px]">USD/lb</span>
              <Svg className="-mt-[6px] ml-[8px]">
                <path d="M1.500 0.500h3v13h-3z" fill="#ddd" stroke="#aaa" strokeWidth="1" />
                <path d="M10 6.500h3a5 5 0 0 1 0 10.500H8" stroke="#aaa" strokeWidth="3.600" />
                <path d="M11 1v11L5.500 6.500z" fill="#aaa" />
              </Svg>
            </div>
            <p className="pt-[2px] pb-[2px] leading-[18px]">Ağırlık: 0.93 lb</p>
          </Group>
          <Group title="Stok Gövdesi" last>
            <label htmlFor="stype" className="block pt-[8px] leading-[18px]">Tip:</label>
            <div className="pt-[5px]"><Select id="stype" label="Tip" value="Blok" /></div>
          </Group>
        </div>
        <div className="ml-px flex w-[18px] justify-center bg-[#eef0f4] pt-[21px] pl-[1px]">
          <div className="h-[207px] w-[6px] bg-[#858585]" />
        </div>
      </div>

      <div className="ml-[6px] shrink-0 border-t-2 border-[#adaeb2]">
        <div className="flex items-start justify-between pt-px pr-[4px] pl-[6px]">
          <h2 className="text-base leading-[20px] font-bold text-[#111]">Tahmini Maliyeti Oranı Parça</h2>
          <ChevronDown size={16} color="#777" strokeWidth={3} aria-hidden="true" />
        </div>
        <p className="flex h-[31px] items-baseline gap-[7px] border-b-2 border-[#999] pt-[3px] pl-[13px] leading-[28px]">
          <span className="text-xl leading-[28px]">13.59</span>
          <span className="text-base leading-[28px]">USD/Parça</span>
        </p>
        <div className="flex justify-between pt-[5px] pr-[35px] text-[11px] leading-[20px] font-bold">
          <h3>Karşılaştırma</h3>
          <span>100%</span>
        </div>
        <div className="flex h-[22px] justify-end pr-[39px]">
          <svg width="23" height="15" viewBox="0 0 23 15" aria-hidden="true"><path d="M11.500 1L22 11h-5v3H6v-3H1z" fill="#d42020" stroke="#601010" /></svg>
        </div>
        <div className="flex items-end border-b border-black pb-[5px]">
          <div className="flex-1 pl-[6px]">
            <Bar label="Geçerli" value="13.59 USD" color="bg-[#ff0000]" />
            <Bar label="Önceki" value="0.00 USD" color="bg-[#c1ccd8]" />
          </div>
          <Svg className="mr-[6px] mb-[2px] ml-[8px]">
            <path d="M5 10V5a4 4 0 0 1 9-1.500v2h3v-1A7 7 0 0 0 4 3" stroke="#666" strokeWidth="1.300" />
            <rect x="2" y="9" width="16" height="10.500" fill="#4b9fb8" stroke="#1d4a5c" strokeWidth="1.100" />
            <path d="M10 11.500v5" stroke="#134" strokeWidth="2" />
          </Svg>
        </div>
        <h3 className="text-[11px] leading-[14px] font-bold">Arıza</h3>
        <table className="mt-[25px] w-full leading-[22px]">
          <tbody>
            <tr><td className="pl-[6px]">Malzeme:</td><td className="w-[64px]">[4.26 USD]</td><td className="w-[159px] pr-[5px] text-right">31%</td></tr>
            <tr><td className="pl-[6px]">Üretim:</td><td>[9.32 USD]</td><td className="pr-[5px] text-right">69%</td></tr>
          </tbody>
        </table>
      </div>
      <div className="mt-auto flex justify-end gap-[6px] pr-[6px] pb-[3px]">
        <Svg>
          <path d="M2 1h8l5 5v12.500H2z" fill="#eee" stroke="#333" strokeWidth="1.200" />
          <path d="M5.500 1v17M10 1v5h5" stroke="#333" strokeWidth="1.300" strokeDasharray="1.500 1" />
          <g fill="#eee" stroke="#333"><ellipse cx="14" cy="17" rx="5" ry="2" /><ellipse cx="14" cy="14" rx="4" ry="2" /></g>
        </Svg>
        <Svg>
          <path d="M4 1.500h14.500v17.500H4z" fill="#fff" stroke="#333" strokeWidth="1.300" />
          <circle cx="12" cy="9" r="4.800" fill={ORANGE} /><path d="M12 9V4.200A4.800 4.800 0 0 1 16.800 9z" fill="#2478a0" />
          <path d="M6.500 16.500h9" stroke="#333" strokeWidth="1.200" />
          <path d="M4 0v8M0 4h8M1 1l6 6M7 1L1 7" stroke="#2478a0" strokeWidth="1.200" />
        </Svg>
      </div>
    </aside>
  );
}

export default function App() {
  return (
    <div className="flex h-screen flex-col overflow-hidden bg-[#f7f7f7] font-['Noto_Sans',sans-serif]">
      <Ribbon />
      <div className="flex min-h-0 flex-1">
        <div className="flex min-w-0 flex-1 flex-col bg-white bg-[radial-gradient(ellipse_34%_62%_at_80%_24%,#dcdfec_0%,rgba(222,225,238,0.8)_40%,transparent_100%),radial-gradient(ellipse_60%_18%_at_96%_52%,#d9dfea_0%,transparent_100%),radial-gradient(ellipse_46%_20%_at_12%_52%,#dcdfec_0%,transparent_100%),linear-gradient(90deg,transparent_70%,#f1f2f3_100%)]">
          <TabStrip />
          <div className="flex min-h-0 flex-1">
            <LeftPanel />
            <Viewport />
          </div>
          <SheetTabs />
        </div>
        <CostingPane />
      </div>
      <footer className="flex h-[23px] shrink-0 items-center border-t border-[#808080] bg-[#e5e5e5] pt-[2px] pl-px text-sm whitespace-nowrap text-[#222]">
        <span className="flex-1">SOLIDWORKS Premium 2025 SP0.0</span>
        <span className="mr-[29px]">Düzenleme Parça</span>
        <Svg size={16} className="mr-[75px]">
          <path d="M8 2l6 11H2z" fill={ORANGE} stroke="#804010" />
          <path d="M3 15v4M7 15v4M11 14v5M15 12v7" stroke="#2478a0" strokeWidth="2.200" />
          <path d="M10 11c4 0 6-2 6-7M13 5l3-4 3 4z" stroke="#222" strokeWidth="2" />
        </Svg>
        <span>Özel</span>
        <svg width="6" height="4" viewBox="0 0 6 4" className="mx-[20px]" aria-hidden="true"><path d="M0 4h6L3 0z" fill="#222" /></svg>
        <Svg size={17} className="mr-[2px] ml-[7px]">
          <path d="M1 5l10-3 8 8-1 3-8 5L1 9z" fill="#eee" stroke="#555" strokeWidth="1.400" />
          <path d="M5 8l6-2 4 4-5 3z" stroke="#555" strokeWidth="1.300" />
        </Svg>
      </footer>
    </div>
  );
}
